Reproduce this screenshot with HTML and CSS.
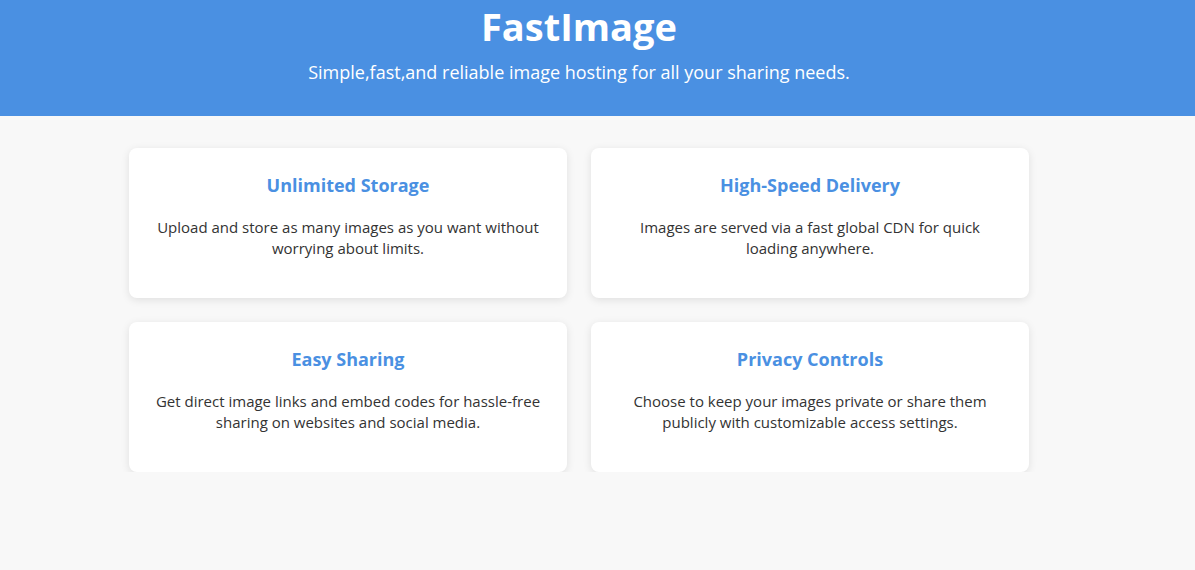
FILE: index.html
```html
<!DOCTYPE html>
<html lang="en">
<head>
<meta charset="utf-8">
<title>FastImage</title>
<link rel="stylesheet" href="styles.css">
</head>
<body>
<header class="hero">
  <div class="hero-inner">
    <h1 class="hero-title">FastImage</h1>
    <p class="hero-sub">Simple,fast,and reliable image hosting for all your sharing needs.</p>
  </div>
</header>
<div class="page">
  <main class="features">
    <section class="card">
      <h3 class="card-title">Unlimited Storage</h3>
      <p class="card-text">Upload and store as many images as you want without worrying about limits.</p>
    </section>
    <section class="card">
      <h3 class="card-title">High-Speed Delivery</h3>
      <p class="card-text">Images are served via a fast global CDN for quick loading anywhere.</p>
    </section>
    <section class="card">
      <h3 class="card-title">Easy Sharing</h3>
      <p class="card-text">Get direct image links and embed codes for hassle-free sharing on websites and social media.</p>
    </section>
    <section class="card">
      <h3 class="card-title">Privacy Controls</h3>
      <p class="card-text">Choose to keep your images private or share them publicly with customizable access settings.</p>
    </section>
  </main>
</div>
</body>
</html>
```
FILE: styles.css
```css
html, body {
  margin: 0;
  padding: 0;
  background: #f8f8f8;
  font-family: "Open Sans", "Noto Sans", sans-serif;
  color: #333;
}
.page {
  width: 1158px;
}
.hero {
  background: #4a90e2;
  color: #fff;
  height: 116px;
}
.hero-inner {
  width: 1158px;
  text-align: center;
}
.hero-title {
  margin: 0;
  font-size: 38px;
  font-weight: 700;
  line-height: 52px;
}
.hero-sub {
  margin: 8px 0 0;
  font-size: 18px;
  line-height: 24px;
}
.features {
  width: 900px;
  margin: 32px auto 0;
  display: grid;
  grid-template-columns: 1fr 1fr;
  gap: 24px;
}
.card {
  background: #fff;
  border-radius: 8px;
  box-shadow: 0 2px 8px rgba(0, 0, 0, 0.1);
  height: 150px;
  box-sizing: border-box;
  padding: 24px 24px;
  text-align: center;
}
.card-title {
  margin: 0 0 19px;
  color: #4a90e2;
  font-size: 18px;
  font-weight: 700;
  line-height: 26px;
}
.card-text {
  margin: 0;
  font-size: 15px;
  line-height: 21px;
}
```
